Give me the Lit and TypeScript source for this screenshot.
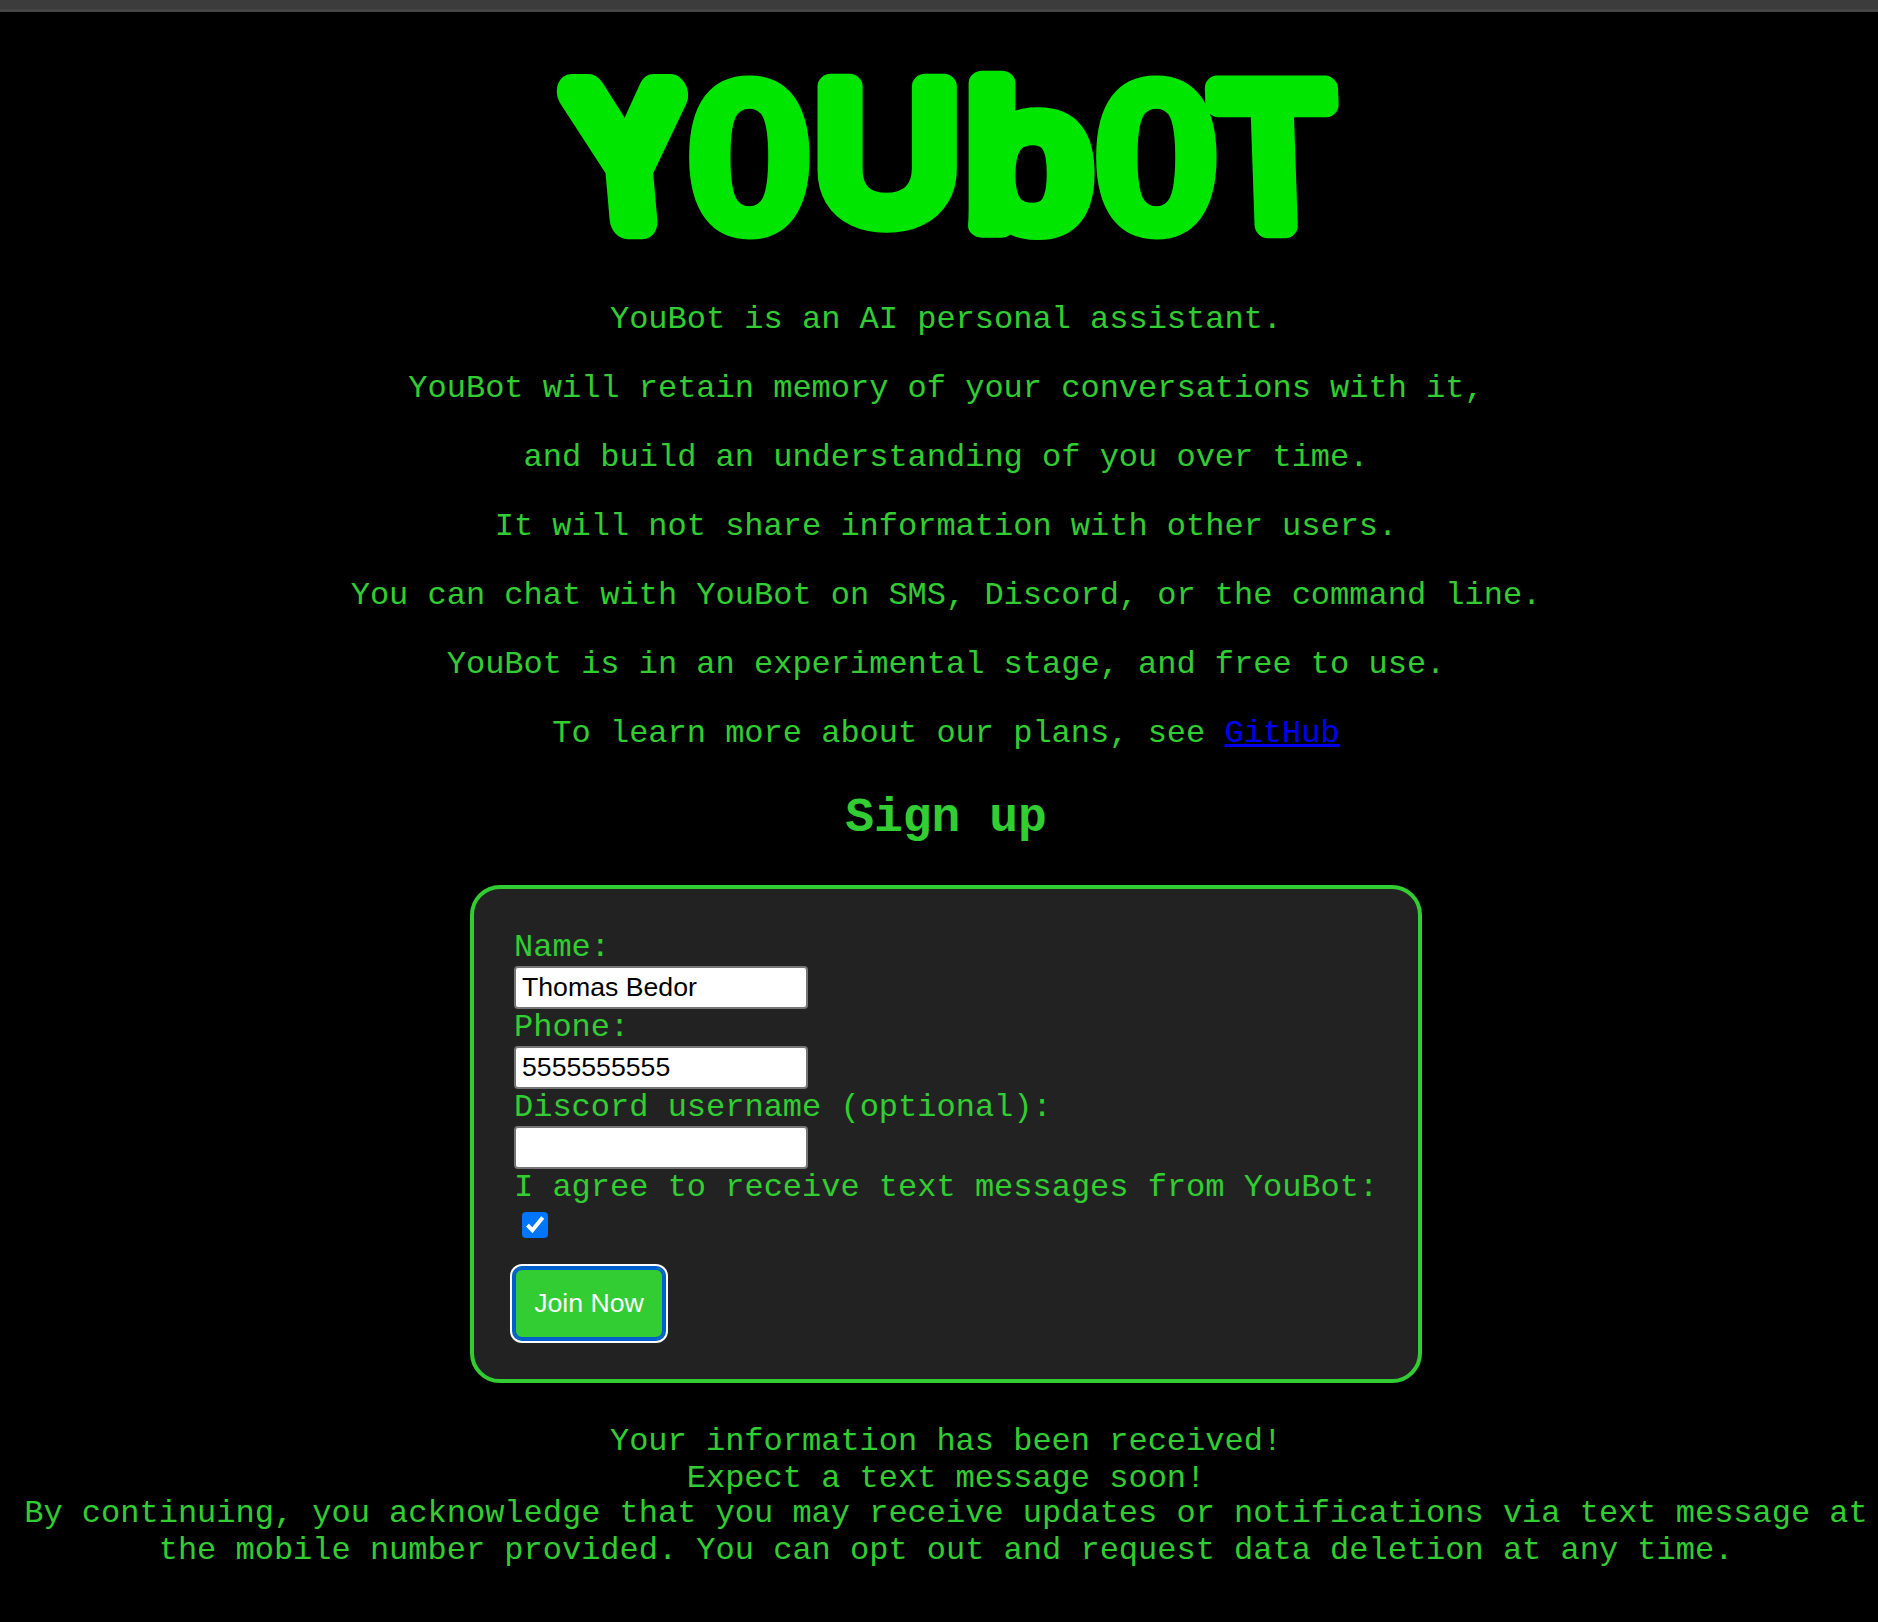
import { LitElement, html, css, svg } from "lit";
import { customElement } from "lit/decorators.js";

interface LogoLetter {
  char: string;
  shape: string;
  transform: string;
}

/* Each letter is stretched to its own place in the wordmark. */
const LETTERS: LogoLetter[] = [
  { char: "Y", shape: "wide", transform: "translate(28 160) skewX(5) scale(.77 .9)" },
  { char: "O", shape: "oval", transform: "translate(137 166) scale(.745 1.03)" },
  { char: "U", shape: "slim", transform: "translate(262.4 158) scale(.97 .93)" },
  { char: "b", shape: "slim", transform: "translate(414.4 166) scale(1.076 .964)" },
  { char: "O", shape: "oval", transform: "translate(544 166) scale(.745 1.03)" },
  { char: "T", shape: "slim", transform: "translate(665 165) skewX(2) scale(.93 .967)" },
];

@customElement("youbot-logo")
export class YoubotLogo extends LitElement {
  static styles = css`
    :host {
      display: block;
      width: 786px;
      height: 190px;
    }
    .logo {
      display: block;
      overflow: visible;
    }
    .letter {
      font-family: "Liberation Sans", Arial, sans-serif;
      font-size: 204.8px;
      fill: #00e600;
      stroke: #00e600;
      stroke-linejoin: round;
      vector-effect: non-scaling-stroke;
    }
    .wide {
      stroke-width: 36px;
    }
    .slim {
      stroke-width: 26px;
    }
    .oval {
      font-family: "Liberation Serif", "Times New Roman", serif;
      font-weight: bold;
      stroke-width: 20px;
    }
  `;

  render() {
    return html`
      <svg class="logo" width="786" height="190" viewBox="0 0 786 190" role="img" aria-label="YouBot">
        ${LETTERS.map(
          (l) => svg`<text class="letter ${l.shape}" transform=${l.transform}>${l.char}</text>`
        )}
      </svg>
    `;
  }
}

@customElement("signup-form")
export class SignupForm extends LitElement {
  static styles = css`
    :host {
      display: block;
    }
    .form {
      box-sizing: border-box;
      width: 952px;
      height: 498px;
      padding: 40px;
      border: 4px solid #32cd32;
      border-radius: 30px;
      background: #222;
      display: flex;
      flex-direction: column;
      align-items: flex-start;
    }
    .label {
      line-height: 37px;
      white-space: nowrap;
    }
    .field {
      box-sizing: border-box;
      width: 294px;
      height: 43px;
      margin: 0;
      padding: 0 6px;
      border: 2px solid #767676;
      border-radius: 4px;
      background: #fff;
      color: #000;
      font: 26.67px "Liberation Sans", Arial, sans-serif;
      outline: none;
    }
    .check {
      display: block;
      margin: 6px 0 0 8px;
    }
    .button {
      box-sizing: border-box;
      width: 150px;
      height: 71px;
      margin: 30px 0 0;
      padding: 0;
      border: 0;
      border-radius: 8px;
      background: #32cd32;
      color: #fff;
      font: 26.67px/71px "Liberation Sans", Arial, sans-serif;
      box-shadow: inset 0 0 0 2px #005fcc, 0 0 0 2px #005fcc, 0 0 0 4px #fff;
    }
  `;

  render() {
    return html`
      <form class="form" @submit=${(e: Event) => e.preventDefault()}>
        <label class="label" for="name">Name:</label>
        <input class="field" id="name" .value=${"Thomas Bedor"} />
        <label class="label" for="phone">Phone:</label>
        <input class="field" id="phone" .value=${"5555555555"} />
        <label class="label" for="discord">Discord username (optional):</label>
        <input class="field" id="discord" />
        <span class="label">I agree to receive text messages from YouBot:</span>
        <svg class="check" width="26" height="26" viewBox="0 0 26 26">
          <rect width="26" height="26" rx="4" fill="#0075ff" />
          <path d="M5.5 13.2 10.4 18.3 20.7 5.6" fill="none" stroke="#fff" stroke-width="4" />
        </svg>
        <button class="button">Join Now</button>
      </form>
    `;
  }
}

const INTRO = [
  "YouBot is an AI personal assistant.",
  "YouBot will retain memory of your conversations with it,",
  "and build an understanding of you over time.",
  "It will not share information with other users.",
  "You can chat with YouBot on SMS, Discord, or the command line.",
  "YouBot is in an experimental stage, and free to use.",
];

@customElement("app-root")
export class AppRoot extends LitElement {
  static styles = css`
    :host {
      display: block;
      box-sizing: border-box;
      height: 1622px;
      overflow: hidden;
      background: #000;
      color: #32cd32;
      font-family: "Liberation Mono", "Courier New", monospace;
      font-size: 32px;
      line-height: 37px;
    }
    .bar {
      box-sizing: border-box;
      height: 12px;
      background: #3c3c3c;
      border-bottom: 3px solid #464646;
    }
    .page {
      display: flex;
      flex-direction: column;
      align-items: center;
      padding: 48px 0 0 14px;
      text-align: center;
    }
    .intro {
      display: flex;
      flex-direction: column;
      gap: 32px;
      margin-top: 51px;
    }
    .text {
      margin: 0;
    }
    .link {
      color: #0000ee;
      text-decoration-thickness: 3px;
    }
    .title {
      margin: 39px 0 40px;
      font-size: 48px;
      line-height: 54px;
      font-weight: bold;
    }
    .notes {
      margin-top: 40px;
    }
    .legal {
      margin: -2px 0 0;
    }
  `;

  render() {
    return html`
      <div class="bar"></div>
      <main class="page">
        <youbot-logo></youbot-logo>
        <div class="intro">
          ${INTRO.map((line) => html`<p class="text">${line}</p>`)}
          <p class="text">To learn more about our plans, see <a class="link" href="#">GitHub</a></p>
        </div>
        <h1 class="title">Sign up</h1>
        <signup-form></signup-form>
        <div class="notes">
          <p class="text">Your information has been received!</p>
          <p class="text">Expect a text message soon!</p>
          <p class="legal">By continuing, you acknowledge that you may receive updates or notifications via text message at the mobile number provided. You can opt out and request data deletion at any time.</p>
        </div>
      </main>
    `;
  }
}
